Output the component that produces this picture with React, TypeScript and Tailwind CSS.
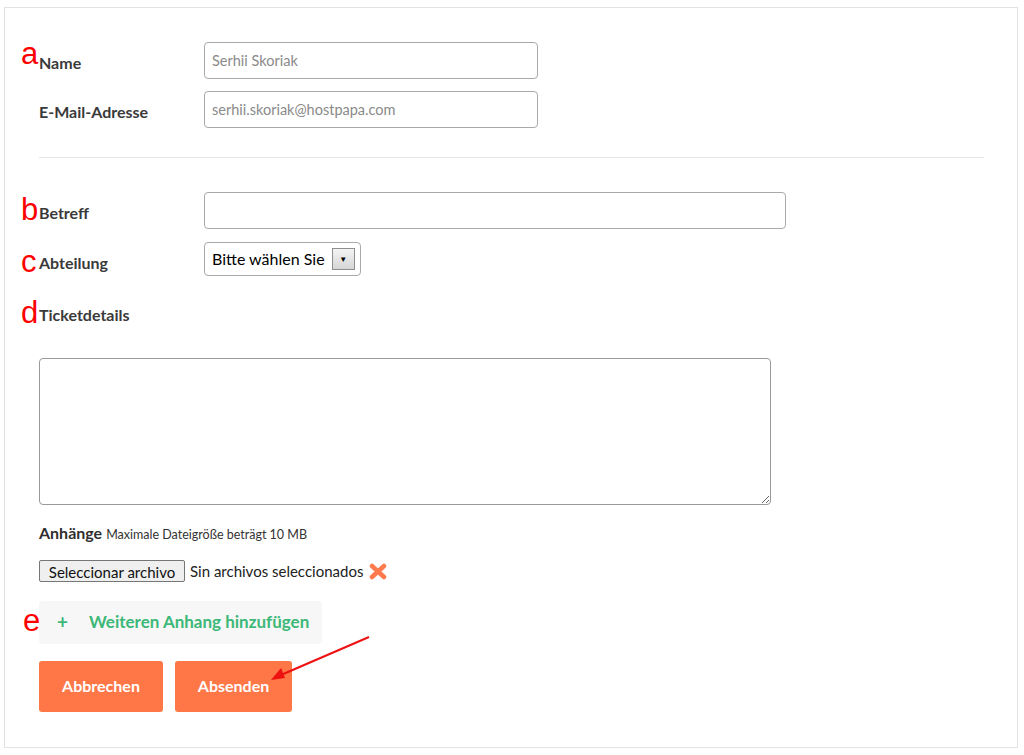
import React from "react";

const font = { fontFamily: "Lato, 'Open Sans', sans-serif" };

function Mark({ ch, className }: { ch: string; className: string }) {
  return (
    <span
      className={`absolute text-[31px] leading-none text-[#ff0000] ${className}`}
      style={{ fontFamily: "'Liberation Sans', Arial, sans-serif" }}
    >
      {ch}
    </span>
  );
}

export default function App() {
  return (
    <div className="min-h-[755px] bg-white" style={font}>
      <div className="relative ml-[4px] mt-[7px] h-[741px] w-[1014px] border border-[#e2e2e2] pl-[34px] pr-[33px] pt-[34px]">
        <Mark ch="a" className="left-[16px] top-[30px]" />
        <Mark ch="b" className="left-[16px] top-[186px]" />
        <Mark ch="c" className="left-[16px] top-[238px]" />
        <Mark ch="d" className="left-[16px] top-[289px]" />
        <Mark ch="e" className="left-[18px] top-[597px]" />

        <div className="flex items-center">
          <label className="w-[165px] pt-[5px] text-[16px] font-bold text-[#3a3a3a]">Name</label>
          <input
            readOnly
            value="Serhii Skoriak"
            className="h-[37px] w-[334px] rounded-[4px] border border-[#a9a9a9] px-[7px] text-[14.5px] text-[#8a8a8a] outline-none"
          />
        </div>
        <div className="mt-[12px] flex items-center">
          <label className="w-[165px] pt-[5px] text-[16px] font-bold text-[#3a3a3a]">E-Mail-Adresse</label>
          <input
            readOnly
            value="serhii.skoriak@hostpapa.com"
            className="h-[37px] w-[334px] rounded-[4px] border border-[#a9a9a9] px-[7px] text-[14.5px] text-[#8a8a8a] outline-none"
          />
        </div>

        <div className="mt-[29px] h-px bg-[#e6e6e6]" />

        <div className="mt-[34px] flex items-center">
          <label className="w-[165px] pt-[5px] text-[16px] font-bold text-[#3a3a3a]">Betreff</label>
          <input className="h-[37px] w-[582px] rounded-[4px] border border-[#a9a9a9] px-[7px] text-[14px] outline-none" />
        </div>
        <div className="mt-[13px] flex items-center">
          <label className="w-[165px] pt-[8px] text-[16px] font-bold text-[#3a3a3a]">Abteilung</label>
          <div className="flex h-[34px] w-[157px] items-center gap-[7px] rounded-[4px] border border-[#a9a9a9] pl-[7px]">
            <span className="text-[16px] text-black">Bitte wählen Sie</span>
            <span className="flex h-[22px] w-[23px] items-center justify-center border border-[#8f8f8f] bg-gradient-to-b from-[#f4f4f4] to-[#d6d6d6] text-[8px] text-black">
              ▼
            </span>
          </div>
        </div>
        <div className="mt-[27px] text-[16px] font-bold text-[#3a3a3a]">Ticketdetails</div>

        <textarea className="mt-[31px] block h-[147px] w-[732px] rounded-[4px] border border-[#9a9a9a] outline-none" />

        <div className="mt-[16px] flex items-baseline gap-[4px] text-[#2f2f2f]">
          <span className="text-[16px] font-bold">Anhänge</span>
          <span className="text-[12.5px] text-[#333]">Maximale Dateigröße beträgt 10 MB</span>
        </div>

        <div className="mt-[15px] flex items-center gap-[5px]">
          <button className="h-[22px] w-[146px] rounded-[2px] border border-[#767676] bg-[#efefef] text-[15px] text-[#111]">
            Seleccionar archivo
          </button>
          <span className="text-[15px] text-[#222]">Sin archivos seleccionados</span>
          <svg width="18" height="17" viewBox="0 0 18 17" className="ml-[1px]">
            <path d="M3 3 L15 14 M15 3 L3 14" stroke="#ff7a4c" strokeWidth="4.5" strokeLinecap="round" />
          </svg>
        </div>

        <div className="mt-[18px] flex h-[43px] w-[283px] items-center rounded-[4px] bg-[#f7f7f7] pl-[18px] text-[17px] font-bold text-[#3cb878]">
          <span className="w-[32px] text-[19px]">+</span>
          <span>Weiteren Anhang hinzufügen</span>
        </div>

        <div className="mt-[17px] flex gap-[12px]">
          <button className="h-[51px] w-[124px] rounded-[3px] bg-[#ff7647] text-[16px] font-bold text-white">
            Abbrechen
          </button>
          <button className="h-[51px] w-[117px] rounded-[3px] bg-[#ff7647] text-[16px] font-bold text-white">
            Absenden
          </button>
        </div>

        <svg
          className="absolute left-[260px] top-[625px]"
          width="110"
          height="50"
          viewBox="0 0 110 50"
        >
          <line x1="104" y1="4" x2="16" y2="42" stroke="#ee1111" strokeWidth="2" />
          <path d="M6 47 L16 35 L20 45 Z" fill="#ee1111" />
        </svg>
      </div>
    </div>
  );
}
